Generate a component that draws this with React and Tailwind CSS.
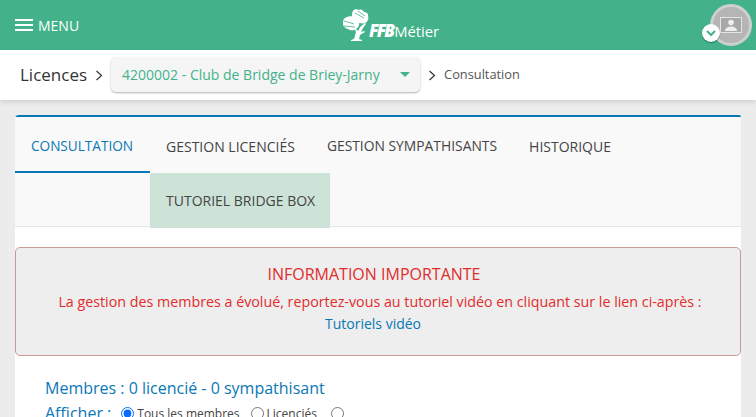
const tabs = [
  { label: "GESTION LICENCIÉS", size: "text-[14px]" },
  { label: "GESTION SYMPATHISANTS", size: "text-[13.850px]" },
  { label: "HISTORIQUE", size: "text-[14px]" },
];

function Chevron({ className }) {
  return (
    <svg width="8" height="11" viewBox="0 0 8 11" fill="none" stroke="#333" strokeWidth="1.2" className={className}>
      <path d="M1.500 1l5 4.500-5 4.500" />
    </svg>
  );
}

export default function App() {
  return (
    <div className="w-[756px] h-[417px] overflow-hidden bg-[#ececec] font-['Open_Sans',sans-serif] text-[#444]">
      <header className="h-[50px] bg-[#43b28a] flex items-center justify-between relative pl-[15px]">
        <div className="flex items-center gap-[5px] text-white text-[14px] font-medium">
          <svg width="18" height="12" viewBox="0 0 18 12" stroke="white" strokeWidth="2"><path d="M0 1h18M0 6h18M0 11h18" /></svg>
          <span>MENU</span>
        </div>
        <div className="absolute left-[343px] top-[9px] flex items-end">
          <svg width="30" height="32" viewBox="0 0 30 32" fill="white">
            <path d="M10 2c1-2 4-2 6-1 2-1 4 0 5 2 2 0 5 2 4 4 1 2 0 6-3 7-2 1-6 0-8-1-2 0-4-1-4-3-1-1-2-2-1-4 0-1 0-3 1-4z" />
            <path d="M2 9c3-2 7-2 10-1 3 1 5 4 4 8-1 4-5 6-9 5-3-1-7-3-7-6 0-2 0-5 2-6z" />
            <path d="M11 30l2-7-1-2 1-1 2 2 3-5 4-3 1 1-3 4-2 4 3-1 1 1-5 3-1 4 3 1v1H8v-1z" />
            <g stroke="#43b28a" strokeWidth="0.8" fill="none"><path d="M1 12l10 3M1 17l11 1M12 4l9 5M15 2l7 5" /></g>
          </svg>
          <span className="text-white font-extrabold italic text-[17px] leading-[20px] tracking-[-2px] -ml-[4px]">FFB</span>
          <span className="text-white text-[14.800px] leading-[20px] ml-[1px]">Métier</span>
        </div>
        <div className="absolute left-[710px] top-[4px] w-[42px] h-[42px] rounded-full bg-[#b5b5b5] border-[3px] border-[#cfcfcf] flex items-center justify-center">
          <svg width="22" height="16" viewBox="0 0 22 16">
            <rect x="0.500" y="0.500" width="21" height="15" fill="#a8a8a8" stroke="#e4e4e4" />
            <circle cx="11" cy="5.500" r="2.800" fill="#eee" />
            <path d="M5 14c0-3 3-4.500 6-4.500s6 1.500 6 4.500z" fill="#eee" />
          </svg>
        </div>
        <div className="absolute left-[702px] top-[24px] w-[18px] h-[18px] rounded-full bg-white shadow-[0_1px_1px_rgba(0,80,60,0.6)] flex items-center justify-center">
          <svg width="10" height="7" viewBox="0 0 10 7" fill="none" stroke="#43b28a" strokeWidth="2"><path d="M1 1l4 4 4-4" /></svg>
        </div>
      </header>

      <div className="h-[50px] bg-white shadow-[0_2px_5px_rgba(0,0,0,0.12)] flex items-center pl-[20px] relative">
        <span className="text-[17px] text-[#333]">Licences</span>
        <Chevron className="ml-[8px]" />
        <div className="ml-[8px] w-[309px] h-[35px] bg-[#f5f5f5] rounded-[5px] shadow-[0_1px_2px_rgba(0,0,0,0.3)] flex items-center justify-between pl-[11px] pr-[10px] -mt-[1px]">
          <span className="text-[14px] text-[#43b28a] font-medium">4200002 - Club de Bridge de Briey-Jarny</span>
          <span className="w-0 h-0 border-l-[5px] border-r-[5px] border-t-[5px] border-l-transparent border-r-transparent border-t-[#43b28a]" />
        </div>
        <Chevron className="ml-[8px]" />
        <span className="ml-[8px] text-[12.800px] text-[#555]">Consultation</span>
      </div>

      <main className="mt-[15px] ml-[15px] w-[726px] bg-white border-t-[2px] border-[#0a78b5] rounded-tl-[4px] rounded-tr-[2px] h-[400px]">
        <div className="bg-[#f9f9f9] border-b border-[#e6e6e6] h-[110px] flex flex-wrap content-start text-[#444]">
          <div className="h-[56px] w-[135px] px-[16px] pt-[5px] flex items-center text-[13.600px] text-[#0a78b5] border-b-[2px] border-[#0a78b5]">CONSULTATION</div>
          {tabs.map((t) => (
            <div key={t.label} className={`h-[56px] px-[16px] pt-[2px] flex items-center ${t.size}`}>{t.label}</div>
          ))}
          <div className="basis-full h-0" />
          <div className="ml-[135px] w-[180px] h-[55px] bg-[#cde3d7] px-[16px] flex items-center whitespace-nowrap text-[14px]">TUTORIEL BRIDGE BOX</div>
        </div>
        <section className="mt-[20px] h-[109px] bg-[#eeeeee] border border-[#c99a9a] rounded-[5px] flex flex-col items-center pt-[15px]">
          <div className="text-[#e22b2b] text-[16px] leading-[22px] -ml-[8px]">INFORMATION IMPORTANTE</div>
          <div className="text-[#e22b2b] text-[14.280px] leading-[20px] mt-[7px] ml-[4px] whitespace-nowrap">La gestion des membres a évolué, reportez-vous au tutoriel vidéo en cliquant sur le lien ci-après :</div>
          <div className="text-[#0a78b5] text-[14px] leading-[20px] mt-[2px] -ml-[10px]">Tutoriels vidéo</div>
        </section>
        <div className="pl-[30px] pt-[20px] text-[#0a78b5] text-[16px]">
          <div className="leading-[24px]">Membres : 0 licencié - 0 sympathisant</div>
          <div className="flex items-center leading-[24px]">
            <span>Afficher :</span>
            <input type="radio" name="r" defaultChecked className="ml-[10px] w-[13px] h-[13px] accent-[#0a6cff] appearance-auto" />
            <span className="ml-[3px] text-[12px] text-[#444] mt-[2px]">Tous les membres</span>
            <input type="radio" name="r" className="ml-[11px] w-[13px] h-[13px] appearance-auto" />
            <span className="ml-[3px] text-[12px] text-[#444] mt-[2px]">Licenciés</span>
            <input type="radio" name="r" className="ml-[14px] w-[13px] h-[13px] appearance-auto" />
          </div>
        </div>
      </main>
    </div>
  );
}
